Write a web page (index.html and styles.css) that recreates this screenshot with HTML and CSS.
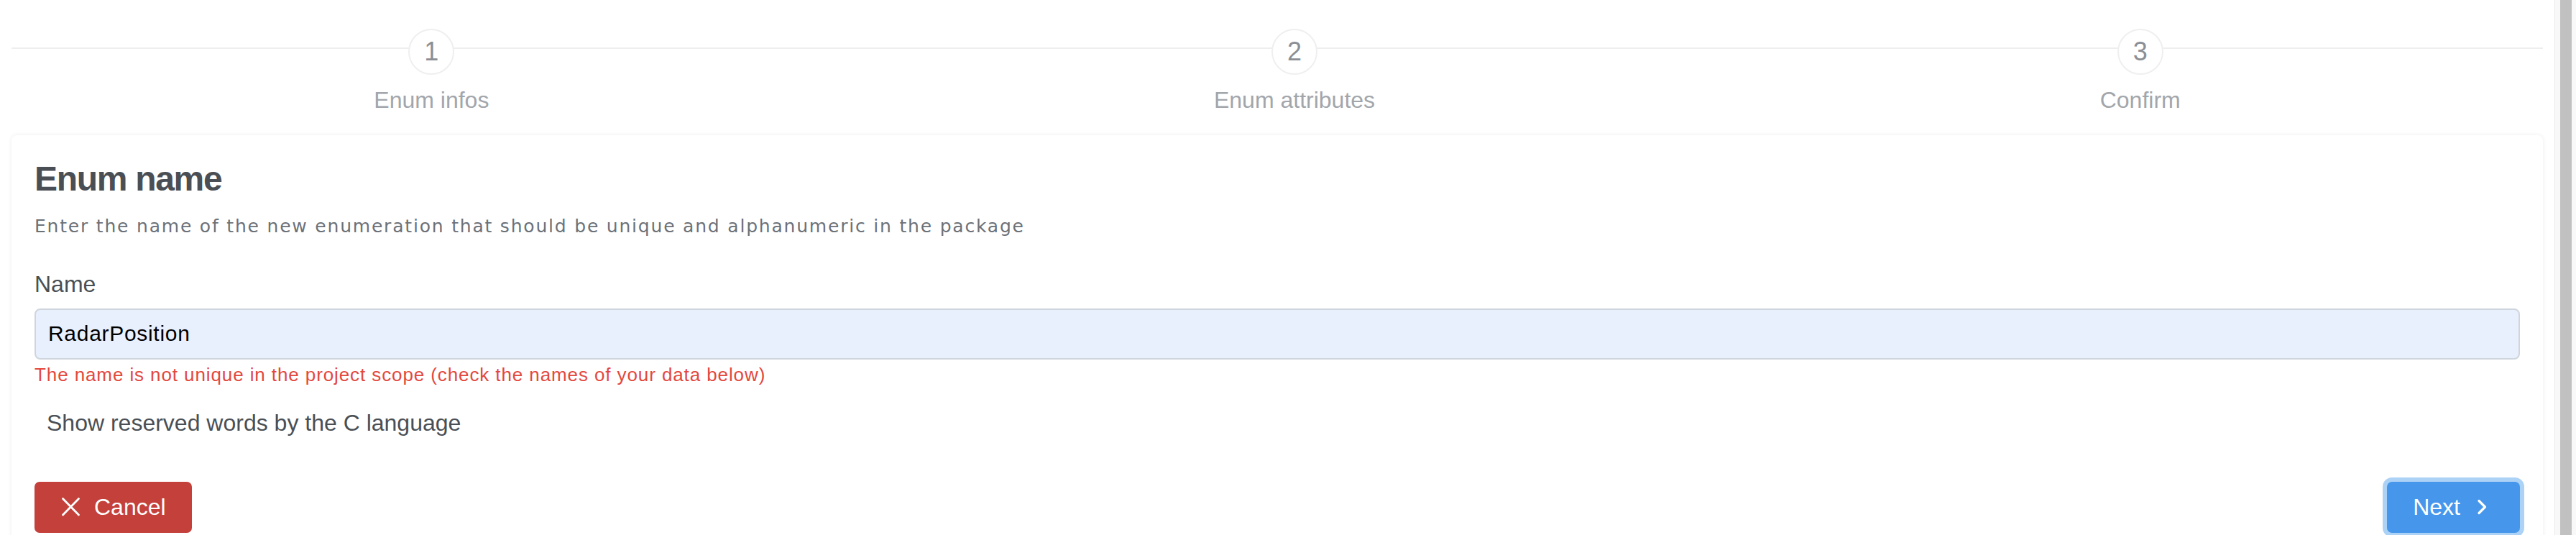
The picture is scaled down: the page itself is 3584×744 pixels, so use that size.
FILE: index.html
```html
<!DOCTYPE html>
<html lang="en">
<head>
<meta charset="utf-8">
<title>New enumeration</title>
<link rel="stylesheet" href="styles.css">
</head>
<body>
<div class="app">
  <main class="content">
    <div class="stepper">
      <div class="step">
        <div class="step-num">1</div>
        <div class="step-label">Enum infos</div>
      </div>
      <div class="step">
        <div class="step-num">2</div>
        <div class="step-label">Enum attributes</div>
      </div>
      <div class="step">
        <div class="step-num">3</div>
        <div class="step-label">Confirm</div>
      </div>
    </div>
    <section class="card">
      <h2 class="card-title">Enum name</h2>
      <p class="card-desc">Enter the name of the new enumeration that should be unique and alphanumeric in the package</p>
      <label class="field-label" for="enum-name">Name</label>
      <input class="field-input" id="enum-name" type="text" value="RadarPosition">
      <div class="field-error">The name is not unique in the project scope (check the names of your data below)</div>
      <div class="reserved">Show reserved words by the C language</div>
      <div class="actions">
        <button class="btn btn-cancel" type="button">
          <svg class="btn-icon" viewBox="0 0 32 32" width="32" height="32" aria-hidden="true"><path d="M3.5 4.5 L25.5 27 M25.5 4.5 L3.5 27" fill="none" stroke="#fff" stroke-width="2.8" stroke-linecap="round"/></svg>
          <span>Cancel</span>
        </button>
        <button class="btn btn-next" type="button">
          <span>Next</span>
          <svg class="btn-icon" viewBox="0 0 32 32" width="32" height="32" aria-hidden="true"><path d="M11 7.5 L19.5 16 L11 24.5" fill="none" stroke="#fff" stroke-width="3.2" stroke-linecap="round" stroke-linejoin="round"/></svg>
        </button>
      </div>
    </section>
  </main>
  <div class="scrollbar"><div class="scrollbar-thumb"></div></div>
</div>
</body>
</html>
```

FILE: styles.css
```css
html, body {
  margin: 0;
  padding: 0;
  background: #ffffff;
}
body {
  font-family: "Liberation Sans", Arial, Helvetica, sans-serif;
  color: #4a4f55;
  overflow: hidden;
}
.app {
  display: flex;
  height: 744px;
  overflow: hidden;
}
.content {
  flex: 1 1 auto;
  min-width: 0;
  padding: 0 16px;
}
.stepper {
  position: relative;
  display: flex;
  padding-top: 40px;
}
.stepper::before {
  content: "";
  position: absolute;
  left: 0;
  right: 0;
  top: 66px;
  height: 2px;
  background: #eeeeee;
}
.step {
  position: relative;
  flex: 1 1 auto;
  display: flex;
  flex-direction: column;
  align-items: center;
}
.step-num {
  width: 60px;
  height: 60px;
  border: 2px solid #efefef;
  border-radius: 50%;
  background: #ffffff;
  display: flex;
  align-items: center;
  justify-content: center;
  font-size: 36px;
  color: #8b8f95;
}
.step-label {
  margin-top: 11px;
  font-size: 32px;
  line-height: 48px;
  color: #a2a6ab;
}
.card {
  margin-top: 25px;
  padding: 32px 32px 40px;
  border-radius: 8px;
  background: #ffffff;
  box-shadow: 0 0 6px rgba(0, 0, 0, 0.08);
  min-height: 600px;
}
.card-title {
  margin: 0;
  font-size: 48px;
  line-height: 1.2;
  font-weight: 700;
  letter-spacing: -1.3px;
  color: #4a4f55;
}
.card-desc {
  margin: 16px 0 0;
  font-family: "DejaVu Sans", "Liberation Sans", sans-serif;
  font-size: 25px;
  line-height: 42px;
  letter-spacing: 1.8px;
  color: #6c7178;
}
.field-label {
  display: block;
  margin-top: 35px;
  font-size: 32px;
  line-height: 48px;
  color: #4a4f55;
}
.field-input {
  display: block;
  box-sizing: border-box;
  width: 100%;
  height: 71px;
  margin-top: 10px;
  padding: 0 17px;
  border: 2px solid #cfd5dc;
  border-radius: 8px;
  background: #e8f0fe;
  font-family: inherit;
  font-size: 30px;
  letter-spacing: 0.7px;
  color: #000000;
  outline: none;
}
.field-error {
  margin-top: 3px;
  font-size: 26px;
  line-height: 36px;
  letter-spacing: 0.9px;
  color: #e3483d;
}
.reserved {
  margin-top: 25px;
  padding-left: 17px;
  font-size: 32px;
  line-height: 48px;
  color: #4a4f55;
}
.actions {
  margin-top: 58px;
  display: flex;
  justify-content: space-between;
  align-items: center;
}
.btn {
  display: inline-flex;
  align-items: center;
  gap: 15px;
  height: 71px;
  padding: 0 36px;
  border: none;
  border-radius: 7px;
  font-family: inherit;
  font-size: 32px;
  color: #ffffff;
  cursor: pointer;
}
.btn-icon {
  display: block;
  flex: 0 0 auto;
}
.btn-cancel {
  background: #c4403a;
}
.btn-next {
  background: #4697eb;
  box-shadow: 0 0 0 6px #acd2f6;
}
.scrollbar {
  flex: 0 0 30px;
  box-sizing: border-box;
  border-left: 1px solid #e8e8e8;
  background: #f8f8f8;
  padding: 0 6px 0 7px;
}
.scrollbar-thumb {
  height: 100%;
  background: #c1c1c1;
}
```
